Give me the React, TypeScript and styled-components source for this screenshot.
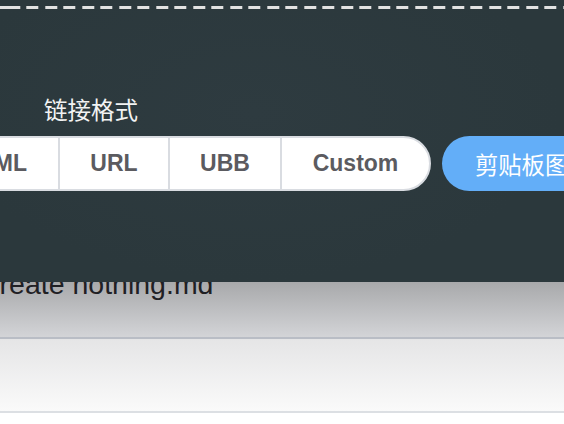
import React from "react";
import styled, { createGlobalStyle } from "styled-components";

const Global = createGlobalStyle`
  html, body { margin: 0; padding: 0; background: #ffffff; }
  body { width: 564px; height: 424px; overflow: hidden; font-family: "Liberation Sans", Arial, sans-serif; }
  #root { position: relative; width: 564px; height: 424px; overflow: hidden; }
`;

const Page = styled.div`
  width: 100%;
  height: 100%;
  background: #ffffff;
`;

const FileRow = styled.div<{ $h: number; $from: string; $to: string; $line: string; $pad?: number; $gradFrom?: number }>`
  height: ${(p) => p.$h}px;
  box-sizing: border-box;
  padding-top: ${(p) => p.$pad ?? 0}px;
  border-bottom: 2px solid ${(p) => p.$line};
  background: linear-gradient(to bottom, ${(p) => p.$from} ${(p) => p.$gradFrom ?? 0}px, ${(p) => p.$to} 100%);
`;

const FileName = styled.div`
  margin-left: -21px;
  font-family: "Liberation Sans", Arial, sans-serif;
  font-size: 28.5px;
  line-height: 32px;
  color: #1f2024;
  white-space: nowrap;
`;

const Overlay = styled.div`
  position: absolute;
  left: 0;
  top: 0;
  width: 100%;
  height: 282px;
  background: radial-gradient(ellipse at 45% 40%, #2e3b40 0%, #2b383c 70%);
  overflow: hidden;
`;

const Dashes = styled.div`
  margin-top: 6px;
  height: 3px;
  background: repeating-linear-gradient(
    to right,
    #e2e2e2 0 11.7px,
    transparent 11.7px 18.5px
  );
  background-position: 8.3px 0;
`;

const Label = styled.div`
  margin: 88px 0 0 44px;
  font-family: "Noto Sans CJK SC", sans-serif;
  font-size: 23.5px;
  line-height: 24px;
  color: #f2f3f3;
`;

const Actions = styled.div`
  margin: 15px 0 0 -51px;
  display: flex;
  align-items: center;
  gap: 11px;
  width: max-content;
`;

const Segmented = styled.div`
  display: flex;
  height: 55px;
  box-sizing: border-box;
  border: 2px solid #d9dce1;
  border-radius: 28px;
  background: #ffffff;
  overflow: hidden;
`;

const Segment = styled.div<{ $w: number; $last?: boolean; $end?: boolean }>`
  width: ${(p) => p.$w}px;
  display: flex;
  align-items: center;
  justify-content: ${(p) => (p.$end ? "flex-end" : "center")};
  padding-right: ${(p) => (p.$end ? "31px" : "0")};
  box-sizing: border-box;
  border-right: ${(p) => (p.$last ? "none" : "2px solid #d9dce1")};
  font-family: "Liberation Sans", Arial, sans-serif;
  font-weight: 700;
  font-size: 23px;
  color: #5b5b60;
  white-space: nowrap;
`;

const ClipButton = styled.div`
  height: 55px;
  box-sizing: border-box;
  padding: 0 34px 0 33px;
  border-radius: 28px;
  background: #63aef8;
  display: flex;
  align-items: center;
  font-family: "Noto Sans CJK SC", sans-serif;
  font-size: 23.3px;
  color: #ffffff;
  white-space: nowrap;
`;

export default function App() {
  return (
    <>
      <Global />
      <Page>
        <FileRow $h={339} $from="#a8a9ab" $to="#d3d4d7" $line="#b9bdc5" $pad={268} $gradFrom={282}>
          <FileName>Create nothing.md</FileName>
        </FileRow>
        <FileRow $h={74} $from="#e5e5e6" $to="#fafafa" $line="#dcdfe3" />
      </Page>
      <Overlay>
        <Dashes />
        <Label>链接格式</Label>
        <Actions>
          <Segmented>
            <Segment $w={109} $end>HTML</Segment>
            <Segment $w={110}>URL</Segment>
            <Segment $w={112}>UBB</Segment>
            <Segment $w={147} $last>Custom</Segment>
          </Segmented>
          <ClipButton>剪贴板图片上传</ClipButton>
        </Actions>
      </Overlay>
    </>
  );
}
